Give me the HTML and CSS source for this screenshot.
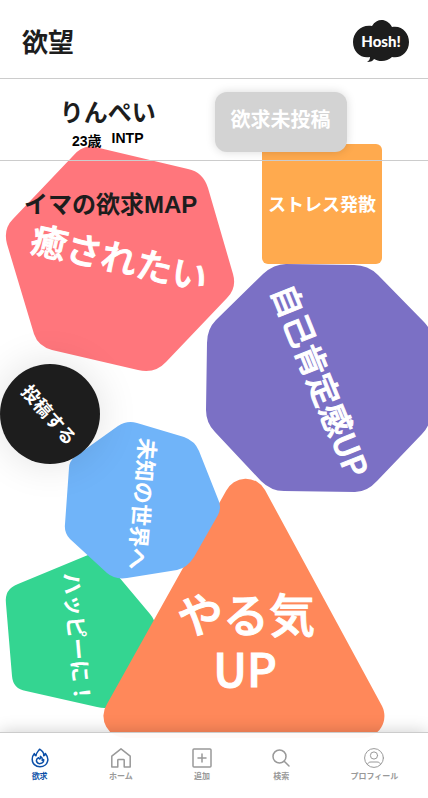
FILE: index.html
```html
<!DOCTYPE html>
<html lang="ja">
<head>
<meta charset="utf-8">
<meta name="viewport" content="width=device-width, initial-scale=1">
<title>欲望</title>
<link rel="stylesheet" href="styles.css">
</head>
<body>
<div class="app">
  <svg class="map" width="440" height="760" viewBox="0 0 440 760" role="group">
    <g class="need need-large">
      <path fill="#ff767c" d="M95 147L188 169Q203 172 208 188L233 274Q237 288 227 298L166 362Q155 374 138 370L52 350Q38 346 34 334L7 244Q3 229 13 219L72 157Q82 144 95 147Z"/>
      <text font-size="36" transform="translate(120 256) rotate(13)">癒されたい</text>
    </g>
    <g class="need">
      <rect fill="#ffaa4e" x="262" y="144" width="120" height="120" rx="6"/>
      <text font-size="18" transform="translate(322 203)">ストレス発散</text>
    </g>
    <g class="need need-large">
      <path fill="#7b70c5" d="M286 264L354 265Q368 265 378 275L424 322Q432 330 432 342L431 414Q430 426 422 434L377 481Q367 492 355 492L284 491Q271 491 261 481L215 432Q206 423 206 410L207 343Q207 329 216 320L263 274Q274 264 286 264Z"/>
      <text font-size="32" transform="translate(322 380) rotate(68)">自己肯定感UP</text>
    </g>
    <g class="need">
      <path fill="#34d591" d="M88 555Q100 551 108 564L150 614Q160 626 152 640L122 698Q115 711 97 707L26 691Q13 689 12 676L6 604Q4 589 18 584Z"/>
      <text font-size="22" transform="translate(79 638) rotate(85)">ハッピーに！</text>
    </g>
    <g class="need need-large">
      <path fill="#ff885a" d="M226 491A22 22 0 0 1 265 490L382 706A22 22 0 0 1 363 738H126A22 22 0 0 1 107 704Z"/>
      <text font-size="46"><tspan x="246" y="612">やる気</tspan><tspan x="245" y="667">UP</tspan></text>
    </g>
    <g class="need">
      <path fill="#70b4f9" d="M118 426Q127 420 137 423L184 437Q195 441 199 451L218 499Q222 507 218 515L194 557Q187 568 177 570L127 578Q115 580 107 573L70 539Q64 533 65 524L69 468Q69 461 76 456Z"/>
      <text font-size="22" transform="translate(144 504) rotate(95)">未知の世界へ</text>
    </g>
  </svg>
  <button class="post" type="button"><span class="post-label">投稿する</span></button>

  <header class="topbar">
    <h1 class="title">欲望</h1>
    <a class="logo" href="#" aria-label="Hosh!">
      <svg width="56" height="42" viewBox="0 0 56 42">
        <path fill="#1d1d1d" d="M19 6C24-2 34-2 39 7C49 5 56 13 56 22C56 32 48 39 39 37C34 42 26 42 21 39C20 41 18 42 14 42C16 41 17 39 17 37C8 39 0 32 0 22C0 12 9 4 19 6Z"/>
        <text class="logo-text" x="28" y="27">Hosh!</text>
      </svg>
    </a>
  </header>

  <section class="profile">
    <div class="person">
      <h2 class="name">りんぺい</h2>
      <p class="facts"><span>23歳</span><span>INTP</span></p>
    </div>
    <button class="status" type="button" disabled>欲求未投稿</button>
  </section>

  <main class="main">
    <h2 class="map-title">イマの欲求MAP</h2>
  </main>

  <nav class="tabs">
    <a class="tab tab-active" href="#">
      <svg class="icon" viewBox="0 0 20 20"><path d="M9.600 1.200C13.500 3.500 14 5.700 13.700 7.800C14.700 7.300 15.200 6.500 15.400 5.500C17.300 8 18.200 10 17.800 12.400C17.200 16 14 18.700 10 18.700C5.500 18.700 2.200 15.500 2.200 11.500C2.200 9 3 7.200 4.400 5.600C4.500 6.700 5 7.400 6 7.800C6 5 7.700 3.800 9.600 1.200Z"/><path d="M10.400 8.300C10.800 9.400 10.500 10.200 9.800 11C9 10.800 8.700 10.300 8.600 9.700C6.800 10.700 6.200 12 6.500 13.300C7 15 8.500 15.800 10.200 15.600C12.500 15.300 14 13.600 13.600 11.500C13.300 12.100 12.800 12.400 12.200 12.300C12.600 10.600 12 9.200 10.400 8.300Z"/></svg>
      <span>欲求</span>
    </a>
    <a class="tab" href="#">
      <svg class="icon" viewBox="0 0 20 20"><path d="M.8 8.200L10 .8L19.200 8.200V19H13.200V12.200Q13.200 11.500 12.500 11.500H7.500Q6.800 11.500 6.800 12.200V19H.8Z"/></svg>
      <span>ホーム</span>
    </a>
    <a class="tab" href="#">
      <svg class="icon" viewBox="0 0 20 20"><rect x="1" y="1" width="18" height="18" rx="1"/><path d="M10 6V14M6 10H14"/></svg>
      <span>追加</span>
    </a>
    <a class="tab" href="#">
      <svg class="icon" viewBox="0 0 20 20"><circle cx="8.500" cy="8.500" r="6.500"/><path d="M13.200 13.200L18 18"/></svg>
      <span>検索</span>
    </a>
    <a class="tab" href="#">
      <svg class="icon icon-thin" viewBox="0 0 20 20"><circle cx="10" cy="10" r="9.400"/><circle cx="10" cy="7.500" r="3.600"/><path d="M3.500 16.500C4 14.700 5 14 7 14H13C15 14 16 14.700 16.500 16.500"/></svg>
      <span>プロフィール</span>
    </a>
  </nav>
</div>
</body>
</html>
```
FILE: styles.css
```css
* {
  box-sizing: border-box;
}

body {
  margin: 0;
  background: #fff;
  color: #1d1d1d;
  font-family: "Liberation Sans", "Noto Sans CJK JP", sans-serif;
}

h1, h2, p {
  margin: 0;
}

button {
  border: 0;
  font-family: inherit;
}

.app {
  position: relative;
  display: flex;
  flex-direction: column;
  min-height: 100vh;
  overflow: hidden;
}

/* Free canvas of floating shapes */
.map {
  position: absolute;
  top: 0;
  left: 0;
}

.need text {
  fill: #fff;
  font-family: "Noto Sans CJK JP", sans-serif;
  font-weight: 700;
  text-anchor: middle;
  dominant-baseline: central;
}

.need-large text {
  font-weight: 500;
  stroke: #fff;
  stroke-width: 1px;
}

.post {
  position: absolute;
  top: 364px;
  left: 0;
  display: grid;
  place-items: center;
  width: 100px;
  height: 100px;
  padding: 0;
  border-radius: 50%;
  background: #1d1d1d;
  color: #fff;
  box-shadow: 0 0 40px rgba(0, 0, 0, 0.12);
}

.post-label {
  font-size: 18px;
  font-weight: 700;
  white-space: nowrap;
  transform: rotate(49deg);
}

.topbar,
.profile,
.main,
.tabs {
  position: relative;
}

.topbar {
  display: flex;
  align-items: center;
  justify-content: space-between;
  height: 79px;
  padding: 4px 19px 0 22px;
  border-bottom: 1px solid #ccc;
}

.title {
  padding-top: 4px;
  font-size: 26px;
  line-height: 40px;
}

.logo {
  display: flex;
}

.logo-text {
  fill: #fff;
  font-family: Lato, sans-serif;
  font-size: 15px;
  font-weight: 900;
  text-anchor: middle;
}

.profile {
  display: grid;
  grid-template-columns: 1fr 1fr;
  align-items: start;
  height: 82px;
  padding: 13px 0 0 1px;
  border-bottom: 1px solid #ccc;
}

.person {
  display: flex;
  flex-direction: column;
  align-items: center;
  padding-top: 4px;
}

.name {
  font-size: 24px;
  line-height: 34px;
}

.facts {
  display: flex;
  align-items: flex-start;
  gap: 10px;
  color: #000;
  font-size: 14px;
  font-weight: 700;
}

.status {
  width: 132px;
  height: 60px;
  padding: 0 0 8px;
  border-radius: 12px;
  background: #d3d3d3;
  color: #fff;
  font-size: 20px;
  font-weight: 700;
  box-shadow: 0 0 10px rgba(0, 0, 0, 0.15);
}

.main {
  flex: 1;
  padding: 26px 24px;
  pointer-events: none;
}

.map-title {
  font-size: 24px;
  line-height: 36px;
}

.tabs {
  display: flex;
  justify-content: space-around;
  height: 66px;
  padding-top: 15px;
  border-top: 1px solid #ccc;
  background: rgba(255, 255, 255, 0.96);
  box-shadow: 0 0 16px rgba(0, 0, 0, 0.2);
}

.tab {
  display: flex;
  flex-direction: column;
  align-items: center;
  gap: 2px;
  color: #999;
  font-size: 8px;
  font-weight: 700;
  line-height: 14px;
  text-decoration: none;
}

.tab-active {
  color: #0b4fa8;
}

.icon {
  width: 20px;
  height: 20px;
  fill: none;
  stroke: currentColor;
  stroke-width: 1.5;
  stroke-linecap: round;
  stroke-linejoin: round;
}

.icon-thin {
  stroke-width: 1;
}
```
